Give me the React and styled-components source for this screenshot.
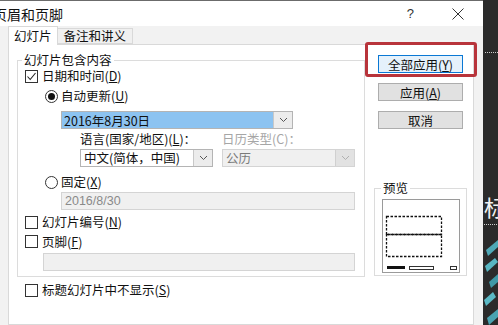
import React from "react";
import styled, { createGlobalStyle } from "styled-components";

const GlobalStyle = createGlobalStyle`
  html, body {
    margin: 0;
    padding: 0;
    background: #2a2a2a;
  }
  body {
    width: 498px;
    height: 325px;
    overflow: hidden;
    font-family: "Noto Sans CJK SC", "Noto Sans", sans-serif;
    color: #111;
  }
`;

const Screen = styled.div`
  display: flex;
  width: 498px;
  height: 325px;
  overflow: hidden;
`;

const Dialog = styled.div`
  position: relative;
  flex: none;
  width: 483px;
  height: 325px;
  box-sizing: border-box;
  border-top: 1px solid #6b6b6b;
  background: #f2f2f2;
  display: flex;
  flex-direction: column;
  overflow: hidden;
`;

const TitleBar = styled.div`
  flex: none;
  height: 25px;
  background: #fff;
  display: flex;
  align-items: center;
`;

const Title = styled.div`
  flex: 1;
  margin-left: -7px;
  font-size: 14px;
  line-height: 16px;
`;

const Help = styled.span`
  font-family: "Liberation Sans", sans-serif;
  font-size: 13px;
  color: #333;
  margin-right: 38px;
`;

const CloseIcon = styled.svg`
  margin-right: 19px;
`;

const TabStrip = styled.div`
  flex: none;
  height: 18px;
  display: flex;
  align-items: flex-end;
  padding-left: 8px;
  position: relative;
  z-index: 1;
`;

const Tab = styled.div`
  box-sizing: border-box;
  height: ${(p) => (p.$active ? "19px" : "16px")};
  margin-bottom: ${(p) => (p.$active ? "-1px" : "0")};
  margin-left: ${(p) => (p.$active ? "0" : "-1px")};
  padding: 0 ${(p) => (p.$active ? "5px" : "6px")};
  background: ${(p) => (p.$active ? "#fff" : "#f0f0f0")};
  border: 1px solid #d9d9d9;
  border-bottom: ${(p) => (p.$active ? "none" : "1px solid #d9d9d9")};
  font-size: 12.5px;
  line-height: 16px;
  display: flex;
  align-items: center;
`;

const Panel = styled.div`
  flex: 1;
  margin-left: 8px;
  width: 466px;
  box-sizing: border-box;
  border: 1px solid #d9d9d9;
  background: #fff;
  display: flex;
`;

const LeftCol = styled.div`
  padding: 15px 0 0 8px;
  width: 348px;
  flex: none;
`;

const RightCol = styled.div`
  flex: 1;
  display: flex;
  flex-direction: column;
  padding-top: 10px;
`;

const Group = styled.div`
  position: relative;
  box-sizing: border-box;
  width: ${(p) => p.$width}px;
  height: ${(p) => (p.$height ? `${p.$height}px` : "auto")};
  border: 1px solid #dcdcdc;
  padding: 0 9px 5px 7px;
`;

const Legend = styled.span`
  position: absolute;
  left: ${(p) => p.$left ?? 4}px;
  top: -7px;
  padding: 0 2px;
  background: #fff;
  font-size: 12.5px;
  line-height: 12px;
`;

const Row = styled.div`
  display: flex;
  align-items: center;
  height: ${(p) => p.$h ?? 20}px;
  margin-top: ${(p) => p.$mt ?? 0}px;
  padding-left: ${(p) => p.$indent ?? 0}px;
  font-size: 12.5px;
  line-height: 14px;
  color: ${(p) => (p.$muted ? "#a6a6a6" : "#111")};
`;

const Key = styled.span`
  text-decoration: underline;
  text-underline-offset: 1px;
`;

const CheckBox = styled.span`
  flex: none;
  width: 13px;
  height: 13px;
  box-sizing: border-box;
  border: 1px solid #333;
  background: #fff;
  margin-right: 4px;
  display: flex;
  align-items: center;
  justify-content: center;
`;

const Radio = styled.span`
  flex: none;
  width: 13px;
  height: 13px;
  box-sizing: border-box;
  border: 1px solid #333;
  border-radius: 50%;
  background: #fff;
  margin-right: 3px;
  display: flex;
  align-items: center;
  justify-content: center;

  &::after {
    content: "";
    display: ${(p) => (p.$on ? "block" : "none")};
    width: 7px;
    height: 7px;
    border-radius: 50%;
    background: #111;
  }
`;

const Field = styled.div`
  box-sizing: border-box;
  height: 18px;
  width: ${(p) => p.$width}px;
  margin-left: ${(p) => p.$ml ?? 0}px;
  margin-top: ${(p) => p.$mt ?? 0}px;
  border: 1px solid ${(p) => (p.$disabled ? "#d4d4d4" : "#b4b4b4")};
  background: ${(p) => (p.$disabled ? "#f0f0f0" : "#fff")};
  display: flex;
  align-items: stretch;
  font-size: 12.5px;
  color: ${(p) => (p.$disabled ? "#8a8a8a" : "#111")};
`;

const FieldText = styled.div`
  flex: 1;
  display: flex;
  align-items: center;
  padding-left: ${(p) => p.$pad ?? 3}px;
  background: ${(p) => (p.$selected ? "#8cc3f1" : "transparent")};
  color: ${(p) => (p.$faded ? "#7a7a7a" : "inherit")};
  font-family: ${(p) => (p.$latin ? '"Liberation Sans", "Noto Sans CJK SC", sans-serif' : "inherit")};
  white-space: nowrap;
  overflow: hidden;
`;

const Arrow = styled.div`
  flex: none;
  width: 19px;
  box-sizing: border-box;
  border-left: 1px solid ${(p) => (p.$disabled ? "#d0d0d0" : "#c8c8c8")};
  background: ${(p) => (p.$disabled ? "#e2e2e2" : "#ececec")};
  display: flex;
  align-items: center;
  justify-content: center;
`;

const SelectGrid = styled.div`
  display: grid;
  grid-template-columns: 133px 133px;
  column-gap: 9px;
  margin-left: 55px;
  margin-top: ${(p) => p.$mt ?? 0}px;
  height: ${(p) => p.$h}px;
  align-items: center;
`;

const SmallLabel = styled.span`
  font-size: 12.5px;
  color: ${(p) => (p.$muted ? "#a6a6a6" : "#111")};
  white-space: nowrap;
`;

const Button = styled.div`
  box-sizing: border-box;
  width: 85px;
  height: 18px;
  margin-left: 13px;
  margin-bottom: ${(p) => p.$mb ?? 10}px;
  border: 1px solid ${(p) => (p.$focus ? "#0a78d4" : "#adadad")};
  background: ${(p) => (p.$focus ? "#e5f1fb" : "#e1e1e1")};
  display: flex;
  align-items: center;
  justify-content: center;
  font-size: 12.5px;
`;

const PreviewGroup = styled(Group)`
  margin: 59px 0 0 9px;
  padding: 10px 0 0 7px;
`;

const PageBox = styled.div`
  width: 78px;
  height: 74px;
  box-sizing: border-box;
  border: 1px solid #9a9a9a;
  background: #fff;
`;

const Highlight = styled.div`
  position: absolute;
  left: 365px;
  top: 41px;
  width: 112px;
  height: 35px;
  box-sizing: border-box;
  border: 3px solid #b8343b;
  border-radius: 3px;
  pointer-events: none;
`;

const Backdrop = styled.div`
  position: relative;
  flex: 1;
  background: #2b2b2b;
  overflow: hidden;
`;

const SlideChar = styled.span`
  position: absolute;
  left: 1px;
  top: 193px;
  font-size: 22px;
  line-height: 26px;
  color: #f2f2f2;
`;

const Chevron = ({ color = "#555" }) => (
  <svg width="9" height="6" viewBox="0 0 9 6">
    <polyline points="1,1 4.5,4.5 8,1" fill="none" stroke={color} strokeWidth="1" />
  </svg>
);

const Check = () => (
  <svg width="11" height="11" viewBox="0 0 11 11">
    <polyline points="1.5,5.5 4.2,8.5 9.5,2" fill="none" stroke="#222" strokeWidth="1.1" />
  </svg>
);

export default function App() {
  return (
    <>
      <GlobalStyle />
      <Screen>
        <Dialog>
          <TitleBar>
            <Title>页眉和页脚</Title>
            <Help>?</Help>
            <CloseIcon width="12" height="12" viewBox="0 0 12 12">
              <line x1="0.5" y1="0.5" x2="11.5" y2="11.5" stroke="#333" strokeWidth="1" />
              <line x1="11.5" y1="0.5" x2="0.5" y2="11.5" stroke="#333" strokeWidth="1" />
            </CloseIcon>
          </TitleBar>

          <TabStrip>
            <Tab $active>幻灯片</Tab>
            <Tab>备注和讲义</Tab>
          </TabStrip>

          <Panel>
            <LeftCol>
              <Group $width={348}>
                <Legend>幻灯片包含内容</Legend>
                <Row $mt={5}>
                  <CheckBox>
                    <Check />
                  </CheckBox>
                  日期和时间(<Key>D</Key>)
                </Row>
                <Row $indent={20}>
                  <Radio $on />
                  自动更新(<Key>U</Key>)
                </Row>
                <Field $width={232} $ml={36} $mt={5}>
                  <FieldText $selected $pad={2}>2016年8月30日</FieldText>
                  <Arrow>
                    <Chevron />
                  </Arrow>
                </Field>
                <SelectGrid $h={18}>
                  <SmallLabel>
                    语言(国家/地区)(<Key>L</Key>)：
                  </SmallLabel>
                  <SmallLabel $muted>日历类型(C)：</SmallLabel>
                </SelectGrid>
                <SelectGrid $h={19} $mt={1}>
                  <Field $width={133}>
                    <FieldText>中文(简体，中国)</FieldText>
                    <Arrow>
                      <Chevron />
                    </Arrow>
                  </Field>
                  <Field $width={133} $disabled>
                    <FieldText $faded>公历</FieldText>
                    <Arrow $disabled>
                      <Chevron color="#b0b0b0" />
                    </Arrow>
                  </Field>
                </SelectGrid>
                <Row $mt={5} $indent={20}>
                  <Radio />
                  固定(<Key>X</Key>)
                </Row>
                <Field $width={294} $ml={36} $disabled>
                  <FieldText $latin>2016/8/30</FieldText>
                </Field>
                <Row $mt={2}>
                  <CheckBox />
                  幻灯片编号(<Key>N</Key>)
                </Row>
                <Row $h={19}>
                  <CheckBox />
                  页脚(<Key>F</Key>)
                </Row>
                <Field $width={312} $ml={18} $mt={2} $disabled />
              </Group>
              <Row $mt={3} $indent={8}>
                <CheckBox />
                标题幻灯片中不显示(<Key>S</Key>)
              </Row>
            </LeftCol>

            <RightCol>
              <Button $focus>
                全部应用(<Key>Y</Key>)
              </Button>
              <Button>
                应用(<Key>A</Key>)
              </Button>
              <Button $mb={0}>取消</Button>
              <PreviewGroup $width={93} $height={88}>
                <Legend $left={6}>预览</Legend>
                <PageBox>
                  <svg width="76" height="72" viewBox="0 0 76 72">
                    <rect x="3.5" y="16.5" width="55" height="18" fill="none" stroke="#111" strokeWidth="1.3" strokeDasharray="2.5 1.5" />
                    <rect x="3.5" y="34.5" width="55" height="22" fill="none" stroke="#111" strokeWidth="1.3" strokeDasharray="2.5 1.5" />
                    <rect x="4" y="66" width="18" height="3" fill="#111" />
                    <rect x="26.5" y="66.5" width="24" height="3" fill="#fff" stroke="#333" strokeWidth="1" />
                    <rect x="67.5" y="66.5" width="6" height="3" fill="#fff" stroke="#333" strokeWidth="1" />
                  </svg>
                </PageBox>
              </PreviewGroup>
            </RightCol>
          </Panel>

          <Highlight />
        </Dialog>

        <Backdrop>
          <svg width="15" height="325" viewBox="0 0 15 325">
            <line x1="2" y1="52.5" x2="15" y2="52.5" stroke="#cfcfcf" strokeWidth="1" strokeDasharray="1 1" />
            <line x1="1" y1="224.5" x2="15" y2="224.5" stroke="#cfcfcf" strokeWidth="1" strokeDasharray="1 1" />
            <polygon points="3,250 15,240 15,247 5,256" fill="#4fa9b7" />
            <polygon points="2,266 12,258 15,262 4,272" fill="#58b6c2" />
            <polygon points="6,282 15,274 15,282 8,288" fill="#3f98a6" />
            <polygon points="1,300 10,292 13,297 3,306" fill="#5ab8c4" />
            <polygon points="4,318 15,309 15,317 6,325" fill="#4aa3b1" />
          </svg>
          <SlideChar>标</SlideChar>
        </Backdrop>
      </Screen>
    </>
  );
}
